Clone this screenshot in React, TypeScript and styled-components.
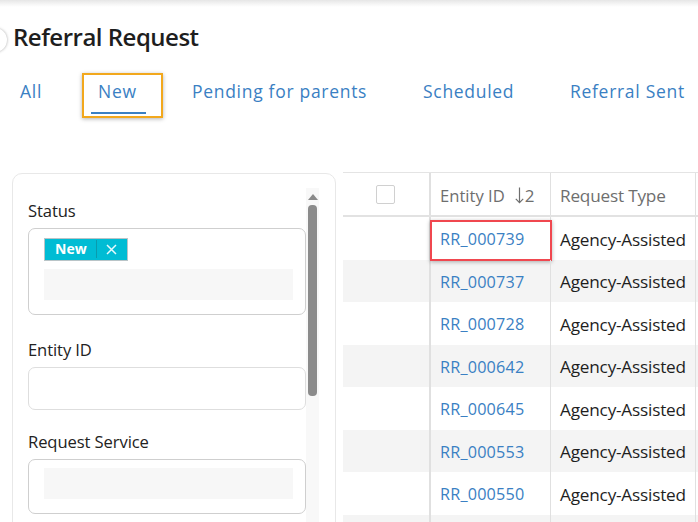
import styled, { createGlobalStyle } from 'styled-components';

const GlobalStyle = createGlobalStyle`
  html, body {
    margin: 0;
    padding: 0;
    background: #ffffff;
    overflow: hidden;
  }
  body {
    font-family: 'Open Sans', 'Noto Sans', sans-serif;
    color: #222;
  }
`;

const rows = ['RR_000739', 'RR_000737', 'RR_000728', 'RR_000642', 'RR_000645', 'RR_000553', 'RR_000550', ''];

const tabs = ['All', 'New', 'Pending for parents', 'Scheduled', 'Referral Sent'];

const tabWidths: Record<string, number> = {
  All: 78,
  New: 94,
  'Pending for parents': 231,
  Scheduled: 147,
  'Referral Sent': 130,
};

const App = () => {
  return (
    <Page>
      <GlobalStyle />
      <TopShade />
      <CollapseKnob />
      <Title>Referral Request</Title>
      <TabBar>
        {tabs.map((t) => (
          <Tab key={t} $w={tabWidths[t]}>
            <TabLabel $active={t === 'New'}>{t}</TabLabel>
            {t === 'New' && <FocusRing />}
          </Tab>
        ))}
      </TabBar>
      <Content>
        <FilterPanel>
          <FilterBody>
            <Label>Status</Label>
            <MultiBox>
              <Chip>
                <ChipText>New</ChipText>
                <ChipClose>
                  <svg width='11' height='11' viewBox='0 0 11 11'>
                    <path d='M1 1 L10 10 M10 1 L1 10' stroke='#e6fafd' strokeWidth='1.5' fill='none' />
                  </svg>
                </ChipClose>
              </Chip>
              <GrayInput />
            </MultiBox>
            <Label>Entity ID</Label>
            <TextBox />
            <Label>Request Service</Label>
            <MultiBox>
              <GrayInput />
            </MultiBox>
          </FilterBody>
          <ScrollTrack>
            <ScrollArrow />
            <ScrollThumb />
          </ScrollTrack>
        </FilterPanel>
        <Table>
          <HeadRow>
            <CheckCell>
              <CheckBox />
            </CheckCell>
            <IdCell $head>
              Entity ID
              <SortMark>
                <svg width='9' height='17' viewBox='0 0 9 17'>
                  <path d='M4.5 0.5 V15.5 M0.8 11.8 L4.5 15.6 L8.2 11.8' stroke='#6e6e6e' strokeWidth='1.2' fill='none' />
                </svg>
                2
              </SortMark>
            </IdCell>
            <TypeCell $head>Request Type</TypeCell>
            <RestCell />
          </HeadRow>
          {rows.map((id, i) => (
            <Row key={i} $odd={i % 2 === 1}>
              <CheckCell />
              <IdCell>
                {id && <IdLink>{id}</IdLink>}
                {i === 0 && <RedBox />}
              </IdCell>
              <TypeCell>{id && 'Agency-Assisted'}</TypeCell>
              <RestCell />
            </Row>
          ))}
        </Table>
      </Content>
    </Page>
  );
};

export default App;

const Page = styled.div`
  position: relative;
  width: 698px;
  height: 522px;
  overflow: hidden;
`;

const TopShade = styled.div`
  height: 7px;
  background: linear-gradient(#e6e6e6, #f6f6f6 60%, #ffffff);
`;

const CollapseKnob = styled.div`
  position: absolute;
  left: -17px;
  top: 28px;
  width: 24px;
  height: 24px;
  border-radius: 50%;
  background: #fff;
  box-shadow: 0 0 3px rgba(0, 0, 0, 0.35);
`;

const Title = styled.h1`
  margin: 14px 0 0 13px;
  font-size: 24px;
  font-weight: 600;
  line-height: 32px;
  color: #1e1e1e;
  letter-spacing: -0.5px;
`;

const TabBar = styled.div`
  display: flex;
  margin-top: 26px;
  padding-left: 20px;
  height: 42px;
`;

const Tab = styled.div<{ $w: number }>`
  position: relative;
  width: ${(p) => p.$w}px;
  flex: none;
`;

const TabLabel = styled.span<{ $active: boolean }>`
  display: inline-block;
  font-size: 17.5px;
  line-height: 24px;
  letter-spacing: 0.7px;
  white-space: nowrap;
  color: #3a80c3;
  padding-bottom: 9px;
  border-bottom: 2px solid ${(p) => (p.$active ? '#3a80c3' : 'transparent')};
  margin-left: ${(p) => (p.$active ? '-7px' : '0')};
  padding-left: ${(p) => (p.$active ? '7px' : '0')};
  padding-right: ${(p) => (p.$active ? '9px' : '0')};
`;

const FocusRing = styled.div`
  position: absolute;
  left: -16px;
  top: -6px;
  width: 81px;
  height: 45px;
  box-sizing: border-box;
  border: 2px solid #f2a81d;
  box-shadow: 0 1px 4px rgba(0, 0, 0, 0.3);
`;

const Content = styled.div`
  display: flex;
  align-items: flex-start;
  margin-top: 52px;
  padding-left: 12px;
  gap: 7px;
`;

const FilterPanel = styled.div`
  width: 324px;
  height: 400px;
  box-sizing: border-box;
  border: 1px solid #e8e8e8;
  border-radius: 10px;
  display: flex;
  flex: none;
`;

const FilterBody = styled.div`
  flex: 1;
  padding: 26px 0 0 15px;
  box-sizing: border-box;
`;

const Label = styled.div`
  font-size: 16.6px;
  line-height: 22px;
  color: #222;
  margin-bottom: 6px;
  letter-spacing: -0.1px;
`;

const MultiBox = styled.div`
  width: 278px;
  box-sizing: border-box;
  border: 1px solid #cfcfcf;
  border-radius: 7px;
  padding: 8px 12px 14px 15px;
  margin-bottom: 24px;
`;

const Chip = styled.div`
  display: inline-flex;
  align-items: center;
  height: 23px;
  box-sizing: border-box;
  background: #00bcd4;
  border: 1px solid #b9c4c7;
  color: #fff;
  margin-bottom: 8px;
`;

const ChipText = styled.span`
  font-weight: 700;
  font-size: 14px;
  padding: 0 9px 0 10px;
  border-right: 1px solid #0a9bad;
  line-height: 18px;
`;

const ChipClose = styled.span`
  display: flex;
  align-items: center;
  padding: 0 10px 0 9px;
`;

const GrayInput = styled.div`
  height: 31px;
  width: 249px;
  background: #f7f7f7;
`;

const TextBox = styled.div`
  width: 278px;
  height: 43px;
  box-sizing: border-box;
  border: 1px solid #dedede;
  border-radius: 7px;
  margin-bottom: 21px;
`;

const ScrollTrack = styled.div`
  width: 14px;
  margin: 14px 16px 0 0;
  background: #f8f8f8;
  display: flex;
  flex-direction: column;
  align-items: center;
`;

const ScrollArrow = styled.div`
  width: 0;
  height: 0;
  margin-top: 6px;
  border-left: 5px solid transparent;
  border-right: 5px solid transparent;
  border-bottom: 6px solid #8a8a8a;
`;

const ScrollThumb = styled.div`
  width: 9px;
  height: 191px;
  margin-top: 5px;
  background: #8b8b8b;
  border-radius: 4px;
`;

const Table = styled.div`
  flex: 1;
  border-top: 1px solid #e4e4e4;
  margin-top: -1px;
`;

const HeadRow = styled.div`
  display: flex;
  height: 42px;
  border-bottom: 2px solid #e2e2e2;
  color: #6e6e6e;
`;

const Row = styled.div<{ $odd: boolean }>`
  display: flex;
  height: 42.5px;
  background: ${(p) => (p.$odd ? '#f4f4f4' : '#ffffff')};
`;

const CheckCell = styled.div`
  width: 88px;
  flex: none;
  display: flex;
  align-items: center;
  padding-left: 33px;
  box-sizing: border-box;
  border-right: 2px solid #e0e0e0;
`;

const CheckBox = styled.div`
  width: 19px;
  height: 19px;
  box-sizing: border-box;
  border: 1px solid #d0d0d0;
  border-radius: 2px;
  background: #fff;
`;

const IdCell = styled.div<{ $head?: boolean }>`
  position: relative;
  width: 120px;
  flex: none;
  box-sizing: border-box;
  padding: 2px 0 0 9px;
  display: flex;
  align-items: center;
  font-size: 16.6px;
  white-space: nowrap;
  border-right: 1px solid #e0e0e0;
  color: ${(p) => (p.$head ? '#6e6e6e' : '#222')};
`;

const SortMark = styled.span`
  display: inline-flex;
  align-items: center;
  gap: 1px;
  margin-left: 10px;
  font-size: 17px;
`;

const TypeCell = styled.div<{ $head?: boolean }>`
  width: 145px;
  flex: none;
  box-sizing: border-box;
  padding: 2px 0 0 9px;
  display: flex;
  align-items: center;
  font-size: 17.2px;
  white-space: nowrap;
  overflow: hidden;
  letter-spacing: -0.2px;
  border-right: 1px solid #e0e0e0;
  color: ${(p) => (p.$head ? '#6e6e6e' : '#1e1e1e')};
`;

const RestCell = styled.div`
  flex: 1;
`;

const IdLink = styled.span`
  color: #3a80c3;
  font-size: 16.2px;
  letter-spacing: 0.2px;
`;

const RedBox = styled.div`
  position: absolute;
  left: -1px;
  top: 3px;
  width: 122px;
  height: 41px;
  box-sizing: border-box;
  border: 2px solid #f0474f;
  box-shadow: 0 1px 4px rgba(0, 0, 0, 0.3);
`;
